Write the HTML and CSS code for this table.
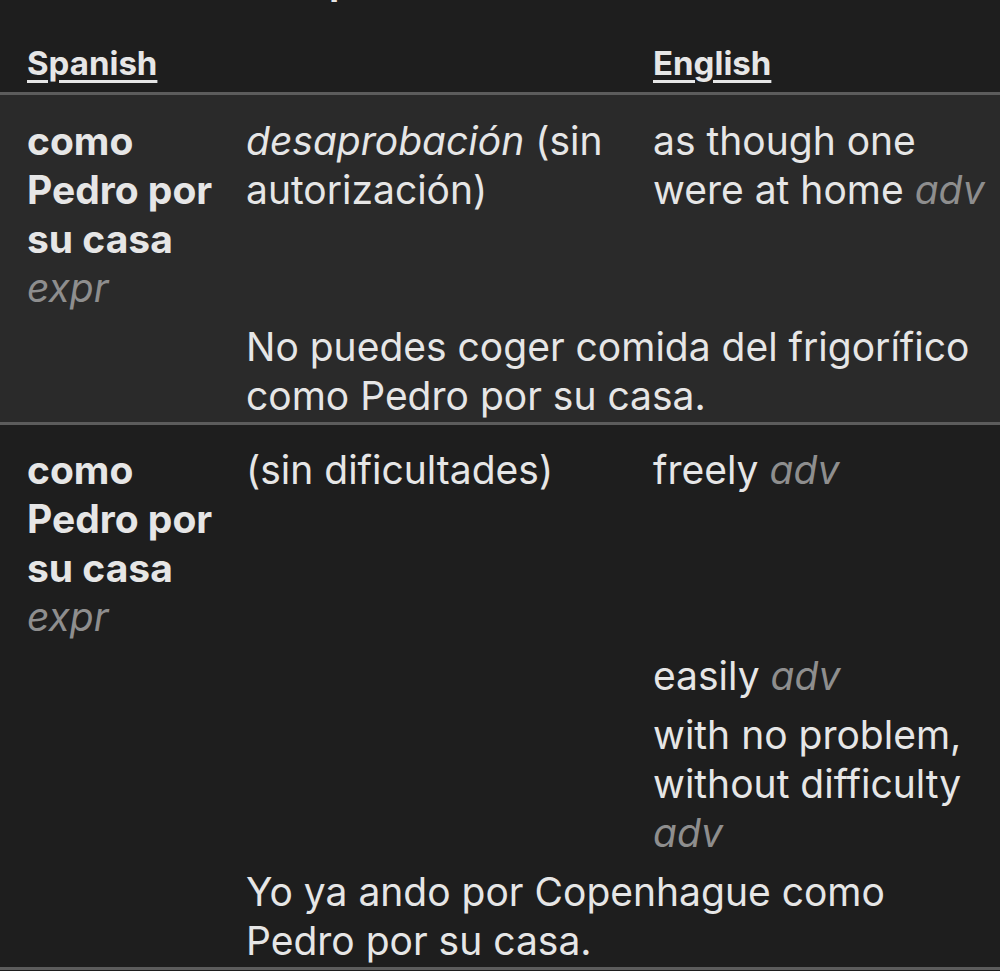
FILE: index.html
```html
<!DOCTYPE html>
<html lang="es">
<head>
<meta charset="utf-8">
<title>como Pedro por su casa</title>
<link rel="stylesheet" href="styles.css">
</head>
<body>
<div class="page">
  <div class="section-title"><h2 class="section-text">Compound Forms:</h2></div>
  <div class="head-row">
    <span class="head-cell">Spanish</span>
    <span class="head-cell">English</span>
  </div>

  <div class="entry entry-alt">
    <div class="line">
      <div class="term"><strong>como Pedro por su casa</strong> <span class="pos">expr</span></div>
      <div class="def"><em>desaprobación</em> (sin autorización)</div>
      <div class="trans">as though one were at home <span class="pos">adv</span></div>
    </div>
    <div class="example">No puedes coger comida del frigorífico como Pedro por su casa.</div>
  </div>

  <div class="entry">
    <div class="line">
      <div class="term"><strong>como Pedro por su casa</strong> <span class="pos">expr</span></div>
      <div class="def">(sin dificultades)</div>
      <div class="trans">freely <span class="pos">adv</span></div>
    </div>
    <div class="line">
      <div class="term"></div>
      <div class="def"></div>
      <div class="trans">easily <span class="pos">adv</span></div>
    </div>
    <div class="line">
      <div class="term"></div>
      <div class="def"></div>
      <div class="trans">with no problem, without difficulty <span class="pos">adv</span></div>
    </div>
    <div class="example">Yo ya ando por Copenhague como Pedro por su casa.</div>
  </div>
</div>
</body>
</html>
```

FILE: styles.css
```css
* { box-sizing: border-box; }

html, body {
  margin: 0;
  padding: 0;
  background: #1e1e1e;
}

body {
  font-family: Inter, "Noto Sans", "Liberation Sans", sans-serif;
  font-size: 39px;
  line-height: 49px;
  color: #e6e6e6;
  overflow: hidden;
  height: 971px;
}

.page {
  width: 1000px;
}

.section-title {
  display: flow-root;
  height: 40px;
}

.section-text {
  margin: -42px 0 0 0;
  font-size: 36px;
  line-height: 49px;
  font-weight: 700;
  text-align: center;
  padding-right: 180px;
  color: #e6e6e6;
}

.head-row {
  display: grid;
  grid-template-columns: 626px 1fr;
  padding: 0 0 5px 27px;
  border-bottom: 3px solid #5c5c5c;
}

.head-cell {
  font-weight: 700;
  font-size: 33px;
  line-height: 47px;
  text-decoration: underline;
  text-decoration-thickness: 3px;
  text-underline-offset: 5px;
  color: #e6e6e6;
}

.head-row {
  min-height: 54px;
}

.entry {
  padding: 20px 0 2px 27px;
  border-bottom: 3px solid #5c5c5c;
}

.entry-alt {
  background: #2a2a2a;
  padding-top: 21px;
}

.line {
  display: grid;
  grid-template-columns: 219px 407px 1fr;
}

.line + .line {
  margin-top: 10px;
}

.term strong {
  font-weight: 700;
}

.term {
  padding-right: 8px;
}

.def {
  padding-right: 16px;
}

.trans {
  padding-right: 4px;
}

.pos {
  font-style: italic;
  color: #8e8e8e;
}

.example {
  margin: 10px 0 0 219px;
  padding-right: 10px;
}
```
